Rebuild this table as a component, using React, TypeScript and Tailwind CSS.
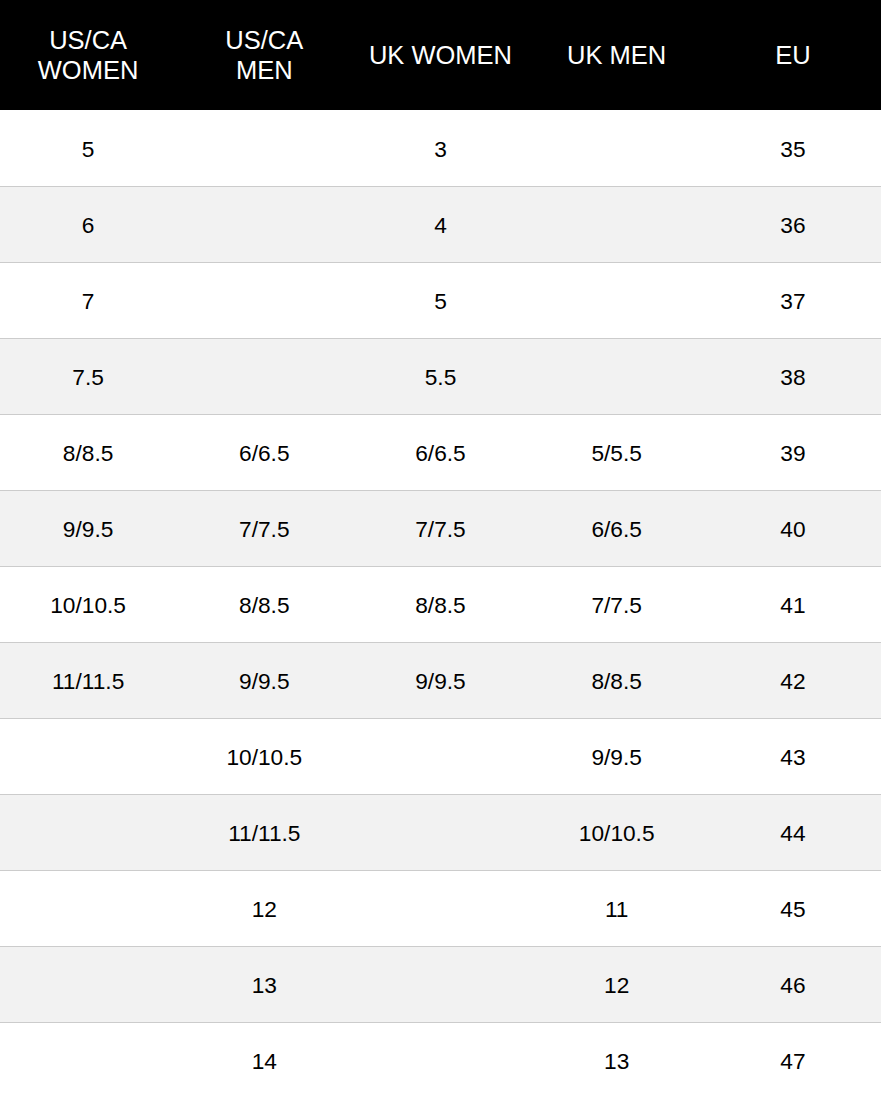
import React from "react";

const HEADERS: string[][] = [
  ["US/CA", "WOMEN"],
  ["US/CA", "MEN"],
  ["UK WOMEN"],
  ["UK MEN"],
  ["EU"],
];

// women US, men US, women UK, men UK, EU
const ROWS: string[][] = [
  ["5", "", "3", "", "35"],
  ["6", "", "4", "", "36"],
  ["7", "", "5", "", "37"],
  ["7.5", "", "5.5", "", "38"],
  ["8/8.5", "6/6.5", "6/6.5", "5/5.5", "39"],
  ["9/9.5", "7/7.5", "7/7.5", "6/6.5", "40"],
  ["10/10.5", "8/8.5", "8/8.5", "7/7.5", "41"],
  ["11/11.5", "9/9.5", "9/9.5", "8/8.5", "42"],
  ["", "10/10.5", "", "9/9.5", "43"],
  ["", "11/11.5", "", "10/10.5", "44"],
  ["", "12", "", "11", "45"],
  ["", "13", "", "12", "46"],
  ["", "14", "", "13", "47"],
];

export default function App() {
  return (
    <div className="w-[881px] min-h-[1099px] bg-white font-['Liberation_Sans',Arial,sans-serif]">
      {/* Header */}
      <div className="grid grid-cols-5 h-[110px] bg-black text-white">
        {HEADERS.map((lines, i) => (
          <div
            key={i}
            className="flex flex-col items-center justify-center text-center text-[25.5px] leading-[30px]"
          >
            {lines.map((l) => (
              <span key={l}>{l}</span>
            ))}
          </div>
        ))}
      </div>

      {/* Body rows */}
      {ROWS.map((row, r) => (
        <div
          key={r}
          className={`grid grid-cols-5 h-[76px] text-black text-[22.7px] ${
            r > 0 ? "border-t border-[#cccccc]" : ""
          } ${r % 2 === 1 ? "bg-[#f2f2f2]" : "bg-white"}`}
        >
          {row.map((cell, c) => (
            <div key={c} className="flex items-center justify-center pt-[2px]">
              {cell}
            </div>
          ))}
        </div>
      ))}
    </div>
  );
}
